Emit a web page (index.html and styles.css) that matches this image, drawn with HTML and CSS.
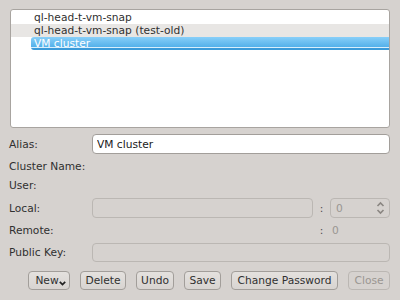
FILE: index.html
```html
<!DOCTYPE html>
<html lang="en">
<head>
    <meta charset="UTF-8">
    <meta name="viewport" content="width=device-width, initial-scale=1.0">
    <title>Cluster Settings</title>
    <link rel="stylesheet" href="styles.css">
</head>
<body>

    <div class="window">
        <!-- Liste der Cluster -->
        <div class="list">
            <div class="row"><span class="item">ql-head-t-vm-snap</span></div>
            <div class="row alt"><span class="item">ql-head-t-vm-snap (test-old)</span></div>
            <div class="row"><span class="item selected">VM cluster</span></div>
        </div>

        <!-- Formular -->
        <div class="form">
            <div class="label">Alias:</div>
            <input class="field" type="text" value="VM cluster">

            <div class="label">Cluster Name:</div>
            <div></div>

            <div class="label">User:</div>
            <div></div>

            <div class="label">Local:</div>
            <div class="port-row">
                <input class="field" type="text" disabled>
                <span class="colon">:</span>
                <div class="spin">
                    <span>0</span>
                    <svg width="9" height="14" viewBox="0 0 9 14">
                        <path d="M1.5 5 L4.5 2 L7.5 5" fill="none" stroke="#8a8682" stroke-width="1.6"/>
                        <path d="M1.5 9 L4.5 12 L7.5 9" fill="none" stroke="#8a8682" stroke-width="1.6"/>
                    </svg>
                </div>
            </div>

            <div class="label">Remote:</div>
            <div class="port-row">
                <div class="spacer"></div>
                <span class="colon">:</span>
                <div class="remote-port">0</div>
            </div>

            <div class="label">Public Key:</div>
            <input class="field" type="text" disabled>
        </div>

        <!-- Knöpfe -->
        <div class="buttons">
            <button class="new">New<svg width="7" height="5" viewBox="0 0 7 5"><path d="M0.8 0.8 L3.5 3.6 L6.2 0.8" fill="none" stroke="#222" stroke-width="1.7"/></svg></button>
            <button class="delete">Delete</button>
            <button class="undo">Undo</button>
            <button class="save">Save</button>
            <button class="change-pw">Change Password</button>
            <button class="close" disabled>Close</button>
        </div>
    </div>

</body>
</html>
```

FILE: styles.css
```css
body {
    margin: 0;
    font-family: 'DejaVu Sans', sans-serif;
    font-size: 10.67px;
    background-color: #d6d2cf;
    color: #303030;
}

.window {
    width: 400px;
    height: 300px;
    box-sizing: border-box;
    padding: 9px 10px 0 10px;
}

/* Liste oben */
.list {
    height: 119px;
    box-sizing: border-box;
    background-color: #ffffff;
    border: 1px solid #a8a4a0;
    border-radius: 3px;
    padding-top: 1px;
}

.row {
    height: 13px;
    line-height: 13px;
    padding-left: 20px;
    display: flex;
}

.row.alt {
    background-color: #e8e6e4;
}

.item {
    padding-left: 3px;
    flex: 1;
}

.item.selected {
    color: #ffffff;
    border-radius: 3px 0 0 3px;
    background: linear-gradient(#88cff9, #55b1ea 75%, #d8effc 77%, #d8effc 84%, #3a9ad9 86%, #3a9ad9);
}

/* Formular */
.form {
    display: grid;
    grid-template-columns: 83px 1fr;
    grid-template-rows: 20px 13px 13px 20px 13px 19px;
    row-gap: 6px;
    margin-top: 6px;
    margin-left: -1px;
    align-items: center;
}

.label {
    line-height: 13px;
}

.field {
    height: 20px;
    box-sizing: border-box;
    margin: 0;
    padding: 0 4px;
    font-family: inherit;
    font-size: inherit;
    color: #202020;
    background-color: #ffffff;
    border: 1px solid #a29e9a;
    border-radius: 4px;
    outline: none;
    width: 100%;
}

.field:disabled {
    background-color: #d6d2cf;
    border-color: #bbb7b3;
}

.form > .field:last-child {
    height: 19px;
}

.port-row {
    display: flex;
    align-items: center;
}

.port-row .field {
    flex: 1;
    width: auto;
}

.spacer {
    flex: 1;
}

.colon {
    width: 17px;
    text-align: center;
    color: #505050;
}

.spin {
    width: 60px;
    height: 20px;
    box-sizing: border-box;
    border: 1px solid #bbb7b3;
    border-radius: 4px;
    display: flex;
    align-items: center;
    justify-content: space-between;
    padding: 0 4px 0 5px;
    color: #9a9692;
}

.remote-port {
    width: 60px;
    padding-left: 2px;
    box-sizing: border-box;
    color: #9a9692;
}

/* Knöpfe unten */
.buttons {
    display: flex;
    justify-content: flex-end;
    gap: 10px;
    margin-top: 9px;
}

button {
    height: 19px;
    box-sizing: border-box;
    padding: 0;
    font-family: inherit;
    font-size: inherit;
    color: #303030;
    background: linear-gradient(#e4e1de, #d8d4d1);
    border: 1px solid #a29e9a;
    border-radius: 4px;
    white-space: nowrap;
}

button.new {
    width: 42px;
    padding: 0 0 0 3px;
    display: flex;
    align-items: center;
    justify-content: center;
}

button.new svg {
    margin-top: 6px;
}

button.delete { width: 46px; }
button.undo { width: 38px; }
button.save { width: 37px; }
button.change-pw { width: 107px; }

button.close {
    width: 42px;
    color: #9a9692;
    border-color: #bbb7b3;
    background: #d6d2cf;
}
```
